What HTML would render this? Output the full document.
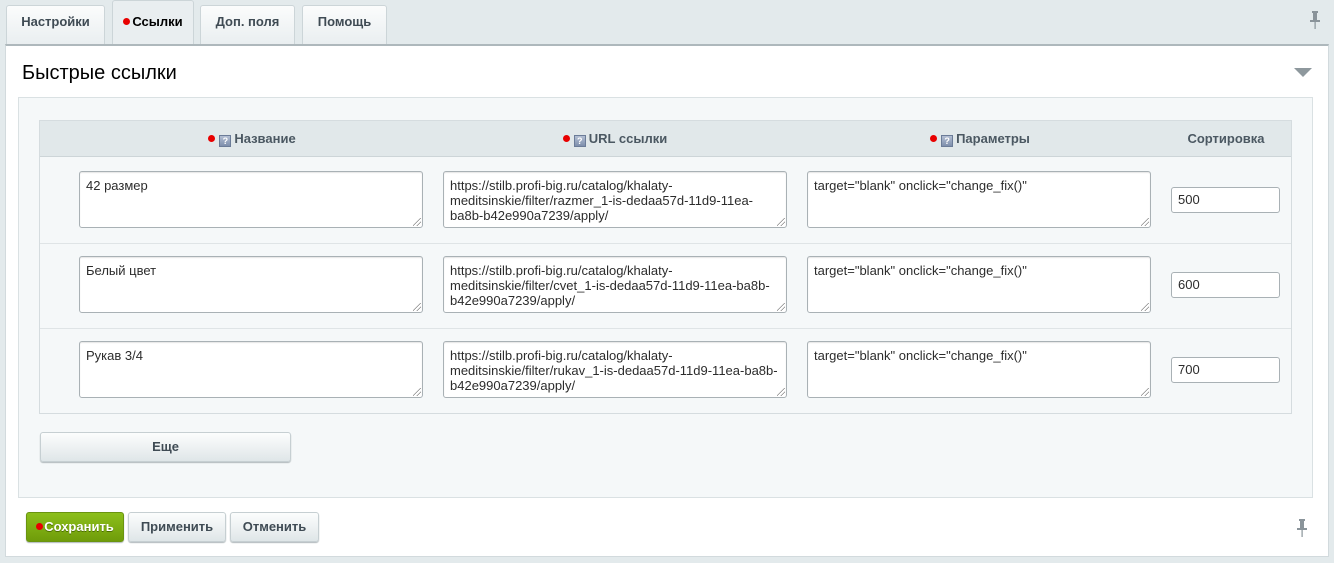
<!DOCTYPE html>
<html><head><meta charset="utf-8"><style>
*{box-sizing:border-box;margin:0;padding:0}
body{width:1334px;height:563px;background:#e3eaec;font-family:Arial,"Liberation Sans",sans-serif;position:relative;overflow:hidden;color:#000}
.a{position:absolute}
.tab{position:absolute;top:5px;height:40px;border:1px solid #ccd5d8;border-bottom:none;border-radius:3px 3px 0 0;background:linear-gradient(#fbfcfc,#e9eef0);font-weight:bold;font-size:13px;color:#3f4b54;text-align:center;line-height:32px}
.tab.act{top:0;height:46px;background:#e9eef0;color:#000;line-height:42px}
.dot{display:inline-block;width:7px;height:7px;border-radius:50%;background:#e80000;margin-right:2px;vertical-align:1px}
.q{display:inline-block;width:12px;height:12px;background:linear-gradient(#b3bfd3,#7e8fac);border:1px solid #6b7c98;color:#fff;font-size:9px;line-height:10px;text-align:center;vertical-align:-1px;margin:0 3px 0 2px}
.th{position:absolute;top:120px;height:37px;line-height:37px;font-weight:bold;font-size:13px;color:#4b5862;text-align:center}
.ta{position:absolute;height:57px;width:344px;border:1px solid #a9b1b5;border-radius:3px;background:#fff;font-size:13px;line-height:15px;color:#2c2c2c;padding:6px 6px;box-shadow:inset 0 1px 1px #e5e5e5}
.ta:after{content:"";position:absolute;right:1px;bottom:1px;width:8px;height:8px;background:linear-gradient(135deg,transparent 45%,#888 45%,#888 52%,transparent 52%,transparent 70%,#888 70%,#888 77%,transparent 77%)}
.in{position:absolute;left:1171px;width:109px;height:26px;border:1px solid #a9b1b5;border-radius:3px;background:#fff;font-size:13px;line-height:24px;padding-left:6px;color:#2c2c2c}
.btn{position:absolute;height:30px;border:1px solid #c6cfd2;border-radius:3px;background:linear-gradient(#fcfdfd,#dfe6e8);box-shadow:0 1px 1px #b0b8bb;font-weight:bold;font-size:13px;color:#3f4b54;text-align:center;line-height:28px}
.sep{position:absolute;left:40px;width:1251px;height:1px;background:#dfe4e6}
</style></head><body>
<div class="tab" style="left:6px;width:99px">Настройки</div>
<div class="tab act" style="left:112px;width:82px"><span class="dot"></span>Ссылки</div>
<div class="tab" style="left:200px;width:95px">Доп. поля</div>
<div class="tab" style="left:302px;width:85px">Помощь</div>
<svg class="a" style="left:1309px;top:11px" width="12" height="18" viewBox="0 0 12 18"><rect x="3" y="0" width="6" height="2" fill="#8a949a"/><rect x="4" y="2" width="4" height="7" fill="#8a949a"/><rect x="1" y="9" width="10" height="2" fill="#8a949a"/><rect x="5.5" y="11" width="1.2" height="7" fill="#8a949a"/></svg>
<div class="a" style="left:5px;top:44px;width:1324px;height:513px;background:#fff;border:1px solid #d2dadd;border-top:2px solid #aeb8bc"></div>
<div class="a" style="left:22px;top:62px;font-size:20px;color:#000">Быстрые ссылки</div>
<svg class="a" style="left:1294px;top:68px" width="18" height="9"><path d="M0 0H18L9 9Z" fill="#8e989d"/></svg>
<div class="a" style="left:18px;top:97px;width:1295px;height:401px;background:#f5f8f9;border:1px solid #dae1e3"></div>
<div class="a" style="left:39px;top:120px;width:1253px;height:294px;border:1px solid #d5dcdf;background:#f5f8f9"></div>
<div class="a" style="left:40px;top:121px;width:1251px;height:36px;background:#e1e8ea;border-bottom:1px solid #cdd5d8"></div>
<div class="th" style="left:40px;width:424px"><span class="dot"></span><span class="q">?</span>Название</div>
<div class="th" style="left:420px;width:390px"><span class="dot"></span><span class="q">?</span>URL ссылки</div>
<div class="th" style="left:790px;width:380px"><span class="dot"></span><span class="q">?</span>Параметры</div>
<div class="th" style="left:1170px;width:112px">Сортировка</div>

<div class="ta" style="left:79px;top:171px">42 размер</div>
<div class="ta" style="left:443px;top:171px">https://stilb.profi-big.ru/catalog/khalaty-meditsinskie/filter/razmer_1-is-dedaa57d-11d9-11ea-ba8b-b42e990a7239/apply/</div>
<div class="ta" style="left:807px;top:171px">target="blank" onclick="change_fix()"</div>
<div class="in" style="top:187px">500</div>
<div class="sep" style="top:243px"></div>
<div class="ta" style="left:79px;top:256px">Белый цвет</div>
<div class="ta" style="left:443px;top:256px">https://stilb.profi-big.ru/catalog/khalaty-meditsinskie/filter/cvet_1-is-dedaa57d-11d9-11ea-ba8b-b42e990a7239/apply/</div>
<div class="ta" style="left:807px;top:256px">target="blank" onclick="change_fix()"</div>
<div class="in" style="top:272px">600</div>
<div class="sep" style="top:328px"></div>
<div class="ta" style="left:79px;top:341px">Рукав 3/4</div>
<div class="ta" style="left:443px;top:341px">https://stilb.profi-big.ru/catalog/khalaty-meditsinskie/filter/rukav_1-is-dedaa57d-11d9-11ea-ba8b-b42e990a7239/apply/</div>
<div class="ta" style="left:807px;top:341px">target="blank" onclick="change_fix()"</div>
<div class="in" style="top:357px">700</div>

<div class="btn" style="left:40px;top:432px;width:251px">Еще</div>
<div class="btn" style="left:26px;top:512px;width:98px;background:linear-gradient(#8cbf1b,#6f9c0a);border-color:#6a9410;color:#fff;text-shadow:0 1px 0 #4c6e00"><span class="dot" style="margin-right:1px"></span>Сохранить</div>
<div class="btn" style="left:128px;top:512px;width:98px">Применить</div>
<div class="btn" style="left:230px;top:512px;width:89px">Отменить</div>
<svg class="a" style="left:1296px;top:519px" width="12" height="18" viewBox="0 0 12 18"><rect x="3" y="0" width="6" height="2" fill="#8a949a"/><rect x="4" y="2" width="4" height="7" fill="#8a949a"/><rect x="1" y="9" width="10" height="2" fill="#8a949a"/><rect x="5.5" y="11" width="1.2" height="7" fill="#8a949a"/></svg>
</body></html>
